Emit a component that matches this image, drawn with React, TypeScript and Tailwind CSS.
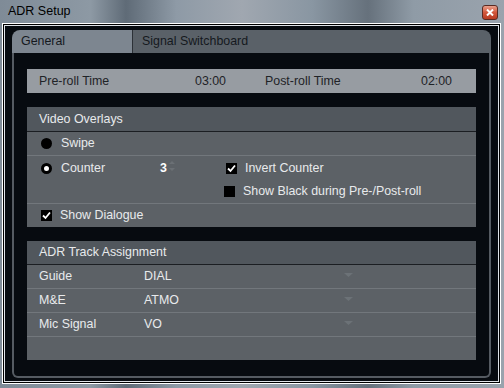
import React from "react";

const Check = ({ on }: { on: boolean }) => (
  <span className="flex h-[11px] w-[11px] items-center justify-center bg-black">
    {on && (
      <svg width="9" height="9" viewBox="0 0 9 9">
        <path d="M1 4.5 L3.5 7 L8 1.5" fill="none" stroke="#fff" strokeWidth="1.8" />
      </svg>
    )}
  </span>
);

const Radio = ({ on }: { on: boolean }) => (
  <span
    className={
      on
        ? "h-[11px] w-[11px] rounded-full border-[3px] border-black bg-white"
        : "h-[11px] w-[11px] rounded-full bg-black"
    }
  />
);

const Arrow = () => (
  <svg width="9" height="5" viewBox="0 0 9 5" className="absolute left-[317px] top-[8px]">
    <path d="M0 0 L9 0 L4.5 4 Z" fill="#6c7277" />
  </svg>
);

const TrackRow = ({ label, value, last }: { label: string; value: string; last?: boolean }) => (
  <div className={"relative flex h-[24px] items-center " + (last ? "" : "border-b border-[#72777c]")}>
    <span className="w-[117px] pl-[12px]">{label}</span>
    <span>{value}</span>
    <Arrow />
  </div>
);

export default function App() {
  return (
    <div className="flex h-[388px] w-[504px] flex-col bg-[linear-gradient(90deg,#7f8b97_0%,#8d99a4_18%,#5f6b77_25%,#8e9aa6_35%,#a0a7b0_48%,#8996a2_62%,#66717c_73%,#8f9ba6_82%,#9aa3ad_100%)] font-['Liberation_Sans',Arial,sans-serif] text-[12.4px]">
      <div className="relative flex h-[23px] shrink-0 items-center pl-[8px] text-[12.5px] text-black">
        <span>ADR Setup</span>
        <div className="absolute left-[482px] top-[5px] flex h-[15px] w-[16px] items-center justify-center rounded-[3px] border border-[#5a2a22] bg-[linear-gradient(180deg,#e9a08c_0%,#d2573c_50%,#b83a22_100%)]">
          <svg width="8" height="7" viewBox="0 0 8 7">
            <path d="M1 0.5 L7 6.5 M7 0.5 L1 6.5" stroke="#fff" strokeWidth="2" />
          </svg>
        </div>
      </div>
      <div className="mb-[4px] ml-[2px] mr-[3px] flex flex-1 border border-white">
        <div className="flex flex-1 border border-black">
          <div className="flex flex-1 border border-[#dfe3e8] bg-[#070b10] px-[7px] pb-[3px] pt-[4px]">
            <div className="flex flex-1 flex-col">
              <div className="flex h-[23px] shrink-0 overflow-hidden rounded-t-[8px] text-[#15191e]">
                <div className="flex w-[120px] items-center bg-[#7d8690] pl-[9px]">General</div>
                <div className="w-px bg-[#2c3137]" />
                <div className="flex flex-1 items-center bg-[#5a6168] pl-[9px]">Signal Switchboard</div>
              </div>
              <div className="flex flex-1 flex-col rounded-b-[6px] border-2 border-t-0 border-[#555b62] px-[13px] pt-[16px] text-[#e8eaec]">
                <div className="flex h-[24px] items-center bg-[#979ca2] text-[#1f2327]">
                  <span className="w-[168px] pl-[12px]">Pre-roll Time</span>
                  <span className="w-[70px]">03:00</span>
                  <span className="w-[156px]">Post-roll Time</span>
                  <span>02:00</span>
                </div>

                <div className="mt-[14px] bg-[#5c6166]">
                  <div className="flex h-[25px] items-center border-b border-[#1b1e22] bg-[#51575d] pl-[12px]">
                    Video Overlays
                  </div>
                  <div className="flex h-[24px] items-center gap-[9px] border-b border-[#72777c] pl-[14px]">
                    <Radio on={false} />
                    <span>Swipe</span>
                  </div>
                  <div className="flex h-[24px] items-center pl-[14px]">
                    <Radio on={true} />
                    <span className="ml-[9px] w-[99px]">Counter</span>
                    <span className="relative w-[66px] font-bold text-white">
                      3
                      <svg width="6" height="12" viewBox="0 0 6 12" className="absolute left-[9px] top-[1px]">
                        <path d="M0 4 L3 1 L6 4 Z M0 8 L3 11 L6 8 Z" fill="#6b7075" />
                      </svg>
                    </span>
                    <Check on={true} />
                    <span className="ml-[8px]">Invert Counter</span>
                  </div>
                  <div className="flex h-[24px] items-center border-b border-[#72777c] pl-[197px]">
                    <Check on={false} />
                    <span className="ml-[8px]">Show Black during Pre-/Post-roll</span>
                  </div>
                  <div className="flex h-[23px] items-center pl-[14px]">
                    <Check on={true} />
                    <span className="ml-[8px]">Show Dialogue</span>
                  </div>
                </div>

                <div className="mt-[14px] bg-[#5c6166]">
                  <div className="flex h-[24px] items-center border-b border-[#1b1e22] bg-[#51575d] pl-[12px]">
                    ADR Track Assignment
                  </div>
                  <TrackRow label="Guide" value="DIAL" />
                  <TrackRow label="M&E" value="ATMO" />
                  <TrackRow label="Mic Signal" value="VO" />
                  <div className="h-[23px]" />
                </div>
              </div>
            </div>
          </div>
        </div>
      </div>
    </div>
  );
}
